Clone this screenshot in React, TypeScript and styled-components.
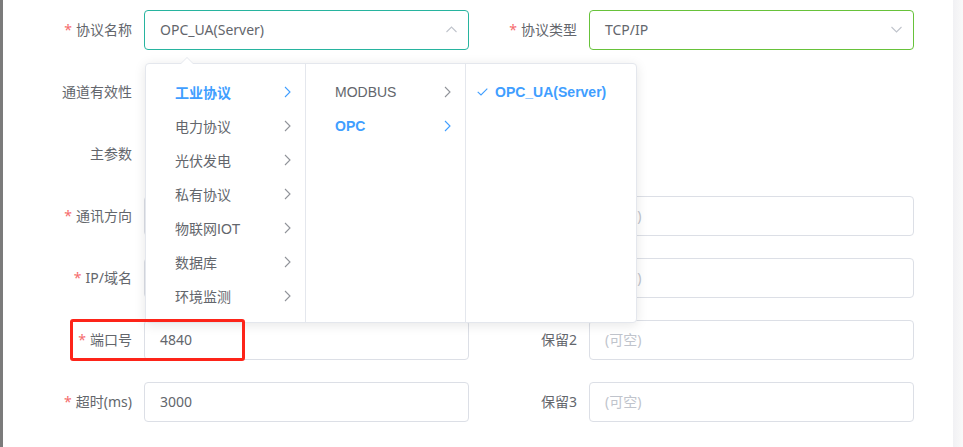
import React from "react";
import styled, { createGlobalStyle, css } from "styled-components";

const Global = createGlobalStyle`
  html, body { margin: 0; padding: 0; background: #fff; }
  body { font-family: "Noto Sans", "Noto Sans CJK SC", sans-serif; }
  * { box-sizing: border-box; }
`;

const Page = styled.div`
  display: flex;
  width: 963px;
  height: 447px;
  overflow: hidden;
  background: #fff;
`;

const LeftBar = styled.div`
  width: 3px;
  flex: none;
  background: #7b7b7b;
`;

const RightStrip = styled.div`
  width: 10px;
  flex: none;
  background: linear-gradient(to right, #f1f1f4, #f9f9f9);
`;

const Main = styled.div`
  position: relative;
  flex: 1;
`;

const Form = styled.div`
  display: grid;
  grid-template-columns: 141px 325px 120px 325px;
  grid-auto-rows: 40px;
  row-gap: 22px;
  padding-top: 10px;
`;

const Label = styled.div`
  display: flex;
  align-items: center;
  justify-content: flex-end;
  padding: 0 12px 2px 0;
  font-size: 14px;
  color: #63666c;
  white-space: nowrap;
`;

const Star = styled.span`
  color: #f56c6c;
  margin-right: 4px;
`;

const Field = styled.div<{ $border?: string; $placeholder?: boolean }>`
  display: flex;
  align-items: center;
  justify-content: space-between;
  height: 40px;
  padding: 0 11px 2px 15px;
  border: 1px solid ${(p) => p.$border || "#dcdfe6"};
  border-radius: 4px;
  font-size: 14px;
  color: ${(p) => (p.$placeholder ? "#c0c4cc" : "#63666c")};
  background: #fff;
`;

const Empty = styled.div``;

const Arrow = ({ up }: { up?: boolean }) => (
  <svg width="11" height="7" viewBox="0 0 11 7">
    <polyline
      points={up ? "0.5,6 5.5,1 10.5,6" : "0.5,1 5.5,6 10.5,1"}
      fill="none"
      stroke="#c0c4cc"
      strokeWidth="1.1"
    />
  </svg>
);

const Dropdown = styled.div`
  position: absolute;
  left: 142px;
  top: 63px;
  width: 492px;
  height: 260px;
  display: flex;
  background: #fff;
  border: 1px solid #e4e7ed;
  border-radius: 4px;
  box-shadow: 0 2px 12px 0 rgba(0, 0, 0, 0.1);
  font-family: "Liberation Sans", "Noto Sans CJK SC", sans-serif;

  &::before,
  &::after {
    content: "";
    position: absolute;
    left: 35px;
    width: 0;
    height: 0;
    border: 6px solid transparent;
    border-top-width: 0;
  }
  &::before {
    top: -7px;
    border-bottom-color: #e4e7ed;
  }
  &::after {
    top: -6px;
    border-bottom-color: #fff;
  }
`;

const Menu = styled.ul<{ $w: number; $last?: boolean }>`
  list-style: none;
  margin: 0;
  padding: 11px 0 0;
  width: ${(p) => p.$w}px;
  height: 100%;
  ${(p) =>
    !p.$last &&
    css`
      border-right: 1px solid #e4e7ed;
    `}
`;

const Node = styled.li<{ $active?: boolean }>`
  position: relative;
  display: flex;
  align-items: center;
  height: 34px;
  padding: 0 30px 0 29px;
  font-size: 14px;
  color: ${(p) => (p.$active ? "#409eff" : "#63666c")};
  font-weight: ${(p) => (p.$active ? 700 : 400)};
  white-space: nowrap;
`;

const NodeArrow = styled.span`
  position: absolute;
  right: 14px;
  top: 50%;
  margin-top: -6px;
  display: flex;
`;

const NodeCheck = styled.span`
  position: absolute;
  left: 11px;
  top: 50%;
  margin-top: -4px;
  display: flex;
`;

const Chevron = ({ active }: { active?: boolean }) => (
  <svg width="7" height="12" viewBox="0 0 7 12">
    <polyline
      points="1,1 6,6 1,11"
      fill="none"
      stroke={active ? "#409eff" : "#909399"}
      strokeWidth="1.1"
    />
  </svg>
);

const Check = () => (
  <svg width="11" height="8" viewBox="0 0 11 8">
    <polyline points="0.7,3.8 4,7 10.3,0.7" fill="none" stroke="#409eff" strokeWidth="1.1" />
  </svg>
);

const Highlight = styled.div`
  position: absolute;
  left: 67px;
  top: 319px;
  width: 175px;
  height: 42px;
  border: 3px solid #fd2419;
  border-radius: 3px;
  pointer-events: none;
`;

type Row = {
  l: string;
  lreq?: boolean;
  lval?: React.ReactNode;
  r?: string;
  rreq?: boolean;
  rval?: React.ReactNode;
};

const placeholder = <Field $placeholder>(可空)</Field>;

const rows: Row[] = [
  {
    l: "协议名称",
    lreq: true,
    lval: (
      <Field $border="#27b49f">
        <span>OPC_UA(Server)</span>
        <Arrow up />
      </Field>
    ),
    r: "协议类型",
    rreq: true,
    rval: (
      <Field $border="#67c23a">
        <span>TCP/IP</span>
        <Arrow />
      </Field>
    ),
  },
  { l: "通道有效性" },
  { l: "主参数" },
  { l: "通讯方向", lreq: true, lval: <Field />, r: "保留0", rval: placeholder },
  { l: "IP/域名", lreq: true, lval: <Field />, r: "保留1", rval: placeholder },
  { l: "端口号", lreq: true, lval: <Field>4840</Field>, r: "保留2", rval: placeholder },
  { l: "超时(ms)", lreq: true, lval: <Field>3000</Field>, r: "保留3", rval: placeholder },
];

const col1 = ["工业协议", "电力协议", "光伏发电", "私有协议", "物联网IOT", "数据库", "环境监测"];
const col2 = ["MODBUS", "OPC"];

export default function App() {
  return (
    <Page>
      <Global />
      <LeftBar />
      <Main>
        <Form>
          {rows.map((row, i) => (
            <React.Fragment key={i}>
              <Label>
                {row.lreq && <Star>*</Star>}
                {row.l}
              </Label>
              {row.lval || <Empty />}
              <Label>
                {row.r && row.rreq && <Star>*</Star>}
                {row.r || ""}
              </Label>
              {row.rval || <Empty />}
            </React.Fragment>
          ))}
        </Form>

        <Dropdown>
          <Menu $w={160}>
            {col1.map((t, i) => (
              <Node key={t} $active={i === 0}>
                {t}
                <NodeArrow>
                  <Chevron active={i === 0} />
                </NodeArrow>
              </Node>
            ))}
          </Menu>
          <Menu $w={160}>
            {col2.map((t, i) => (
              <Node key={t} $active={i === 1}>
                {t}
                <NodeArrow>
                  <Chevron active={i === 1} />
                </NodeArrow>
              </Node>
            ))}
          </Menu>
          <Menu $w={170} $last>
            <Node $active>
              <NodeCheck>
                <Check />
              </NodeCheck>
              OPC_UA(Server)
            </Node>
          </Menu>
        </Dropdown>

        <Highlight />
      </Main>
      <RightStrip />
    </Page>
  );
}
